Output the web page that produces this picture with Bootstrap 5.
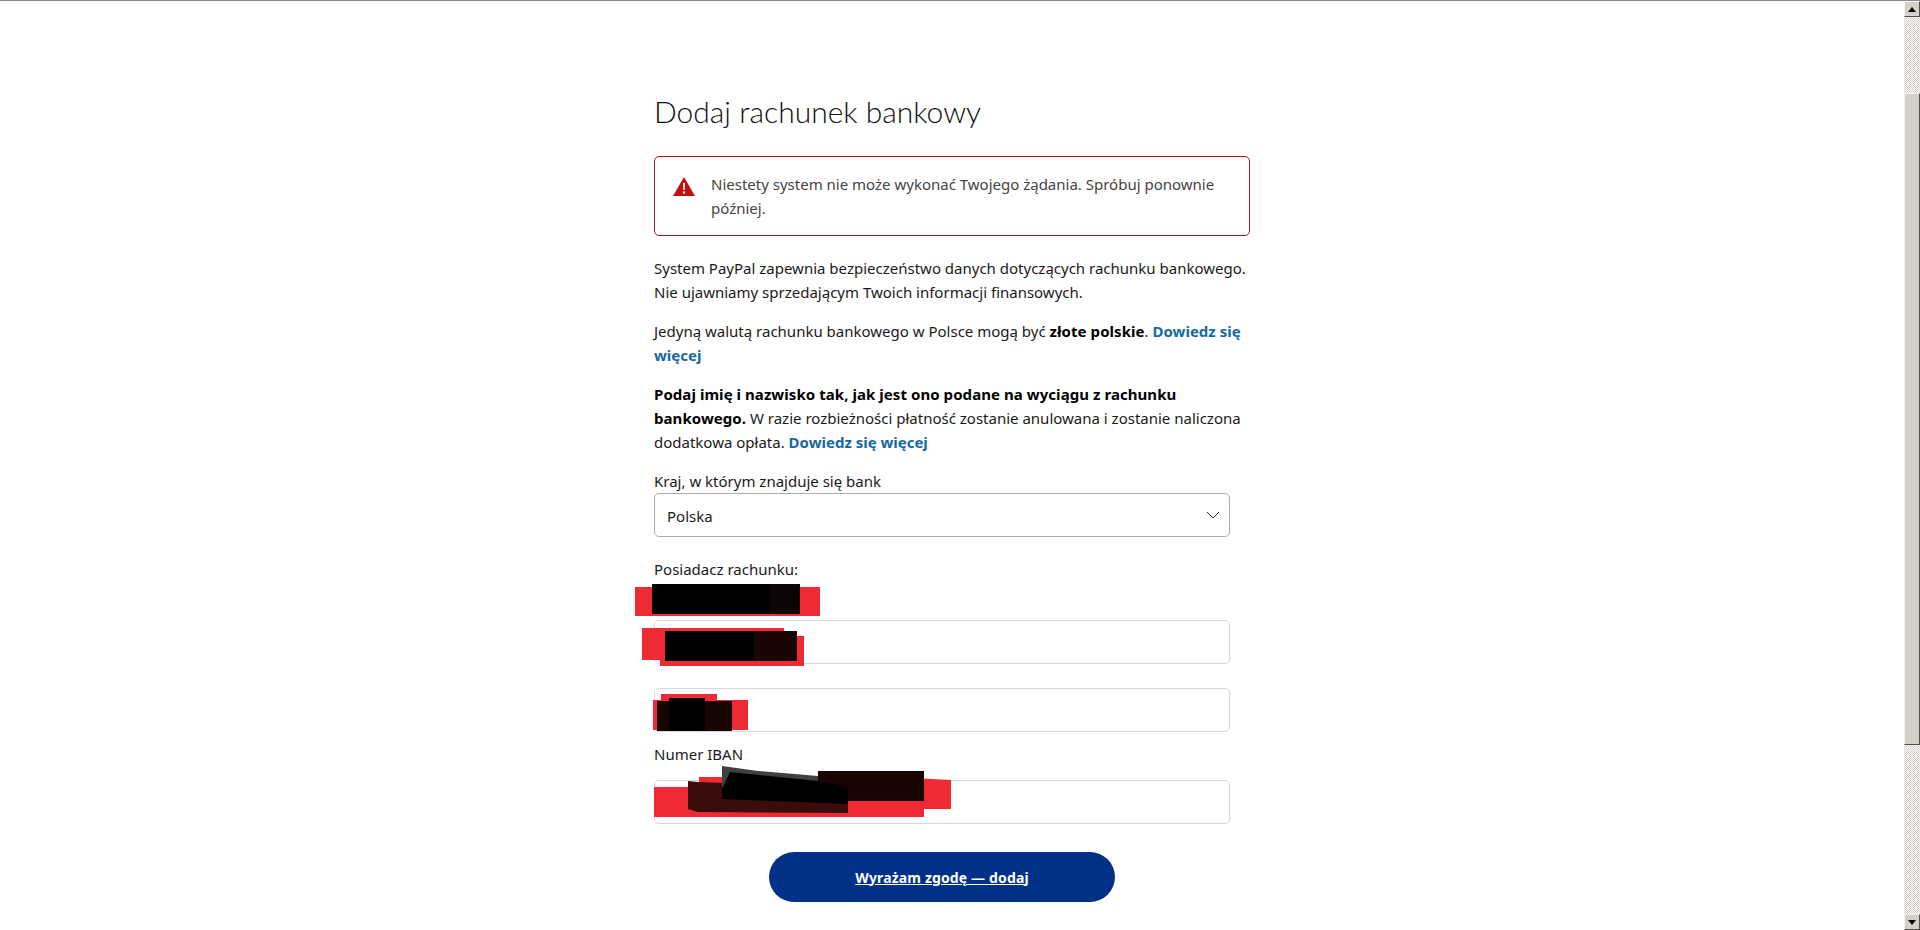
<!DOCTYPE html>
<html lang="pl">
<head>
  <meta charset="UTF-8" />
  <meta name="viewport" content="width=device-width, initial-scale=1.0"/>
  <title>Dodaj rachunek bankowy</title>
  <link href="https://cdn.jsdelivr.net/npm/bootstrap@5.3.3/dist/css/bootstrap.min.css" rel="stylesheet">
  <style>
    html, body { height: 100%; overflow: hidden; }
    body {
      font-family: "Noto Sans", sans-serif;
      font-size: 15px;
      line-height: 24px;
      color: #1a1a1a;
      background: #fff;
      border-top: 1px solid #8a8a8a;
    }
    .page-shell { height: 929px; }
    .page-main { padding-top: 91px; }
    .add-bank { width: 596px; }
    .add-bank h1 {
      font-family: Lato, sans-serif;
      font-weight: 300;
      font-size: 30px;
      line-height: 38px;
      color: #111;
      margin: 0 0 26px;
    }
    .error-box {
      height: 80px;
      border: 1px solid #9c1c28;
      border-radius: 5px;
      padding: 15px 12px 15px 18px;
      margin-bottom: 20px;
      color: #444;
      gap: 16px;
    }
    .error-box svg { flex: none; margin-top: 5px; }
    .add-bank p { margin: 0 0 15px; }
    .add-bank p.last-note { margin-bottom: 16px; }
    .add-bank a { color: #16699f; font-weight: 700; text-decoration: none; }
    .add-bank b { color: #000; letter-spacing: .06px; }
    .add-bank form { width: 576px; }
    .field-label { display: block; margin: 0; line-height: 23px; }
    .add-bank .form-select,
    .add-bank .form-control {
      height: 44px;
      font-size: 15px;
      line-height: 24px;
      padding: 10px 12px;
      border-radius: 5px;
      color: #1a1a1a;
    }
    .add-bank .form-select {
      border-color: #adadad;
      background-position: right 9px center;
      background-size: 14px 8px;
      background-image: url("data:image/svg+xml,%3csvg xmlns='http://www.w3.org/2000/svg' viewBox='0 0 14 8'%3e%3cpath fill='none' stroke='%23333' d='M1 1l6 6 6-6'/%3e%3c/svg%3e");
      margin-bottom: 21px;
    }
    .add-bank .form-control { border-color: #d5d8dc; }
    .holder-name { height: 39px; }
    .gap-field { margin-bottom: 24px; }
    .gap-iban { margin-bottom: 10px; }
    .iban-label { line-height: 24px; margin-bottom: 14px; }
    .submit-row { margin-top: 28px; }
    .btn-agree {
      width: 346px;
      height: 50px;
      border-radius: 25px;
      background: #003087;
      color: #fff;
      border: 0;
      font-size: 14px;
      font-weight: 700;
      letter-spacing: .15px;
      text-decoration: underline;
    }
    .btn-agree:hover { background: #003087; color: #fff; }
    .scroll-rail {
      width: 16px;
      flex: none;
      background: repeating-conic-gradient(#d4d0c8 0 25%, #fff 0 50%) 0 0 / 2px 2px;
    }
    .scroll-btn, .scroll-thumb {
      background: #d4d0c8;
      border: 1px solid;
      border-color: #f4f2ee #55524c #55524c #f4f2ee;
    }
    .scroll-btn { height: 16px; }
    .scroll-thumb { height: 652px; margin-top: 76px; }
    .scroll-end { margin-top: auto; }
    .redactions { position: absolute; top: 0; left: 0; pointer-events: none; }
  </style>
</head>
<body>
  <div class="page-shell d-flex">
    <main class="page-main flex-grow-1">
      <div class="add-bank mx-auto">
        <h1>Dodaj rachunek bankowy</h1>

        <div class="error-box d-flex">
          <svg width="22" height="19" viewBox="0 0 22 19"><path fill="#c40f11" d="M11 0 22 19H0z"/><path fill="#fff" d="M9.9 6h2.2l-.4 7h-1.4zM9.9 14.4h2.2v2.2H9.9z"/></svg>
          <div>Niestety system nie może wykonać Twojego żądania. Spróbuj ponownie później.</div>
        </div>

        <p>System PayPal zapewnia bezpieczeństwo danych dotyczących rachunku bankowego. Nie ujawniamy sprzedającym Twoich informacji finansowych.</p>
        <p>Jedyną walutą rachunku bankowego w Polsce mogą być <b>złote polskie</b>. <a href="#">Dowiedz się więcej</a></p>
        <p class="last-note"><b>Podaj imię i nazwisko tak, jak jest ono podane na wyciągu z rachunku bankowego.</b> W razie rozbieżności płatność zostanie anulowana i zostanie naliczona dodatkowa opłata. <a href="#">Dowiedz się więcej</a></p>

        <form>
          <label class="field-label" for="bank_country">Kraj, w którym znajduje się bank</label>
          <select class="form-select" id="bank_country">
            <option selected>Polska</option>
          </select>

          <div class="field-label">Posiadacz rachunku:</div>
          <div class="holder-name"></div>
          <input type="text" class="form-control gap-field" aria-label="Imię">
          <input type="text" class="form-control gap-iban" aria-label="Nazwisko">

          <label class="field-label iban-label" for="iban">Numer IBAN</label>
          <input id="iban" type="text" class="form-control">

          <div class="submit-row text-center">
            <button type="button" class="btn btn-agree">Wyrażam zgodę — dodaj</button>
          </div>
        </form>
      </div>
    </main>

    <div class="scroll-rail d-flex flex-column">
      <div class="scroll-btn d-flex align-items-center justify-content-center">
        <svg width="8" height="5" viewBox="0 0 8 5"><path d="M4 0l4 5H0z"/></svg>
      </div>
      <div class="scroll-thumb"></div>
      <div class="scroll-btn scroll-end d-flex align-items-center justify-content-center">
        <svg width="8" height="5" viewBox="0 0 8 5"><path d="M0 0h8L4 5z"/></svg>
      </div>
    </div>
  </div>

  <!-- hand-painted marks covering personal data -->
  <svg class="redactions" width="1920" height="930" viewBox="0 0 1920 930">
    <path fill="#ee2a35" d="M635 587h185v29H635z"/>
    <path fill="#0d0505" d="M770 584h30v30h-30z"/>
    <path fill="#000" d="M652 584h118v30H652z"/>

    <path fill="#ee2a35" d="M642 628h142v32H642zM660 636h144v30H660z"/>
    <path fill="#000" d="M665 631h89v30h-89z"/>
    <path fill="#1a0505" d="M754 631h43v30h-43z"/>

    <path fill="#ee2a35" d="M661 694h56v8h-56zM653 700h95v30h-95z"/>
    <path fill="#1a0505" d="M657 701h75v30h-75z"/>
    <path fill="#000" d="M669 698h36v33h-36z"/>

    <path fill="#ee2a35" d="M654 787h270v30H654z"/>
    <path fill="#ee2a35" d="M699 777h195l57 3v29H699z"/>
    <path fill="#3a0c0c" d="M688 781l10 1 150 5v26l-150-1-10-3z"/>
    <path fill="#404040" d="M722 766l36 5 60 5 1 11h-97z"/>
    <path fill="#1a0505" d="M818 771h106v30H818z"/>
    <path fill="#000" d="M730 772l88 9 30 6v17l-126-5v-10z"/>
  </svg>

  <script src="https://cdn.jsdelivr.net/npm/bootstrap@5.3.3/dist/js/bootstrap.bundle.min.js"></script>
</body>
</html>
